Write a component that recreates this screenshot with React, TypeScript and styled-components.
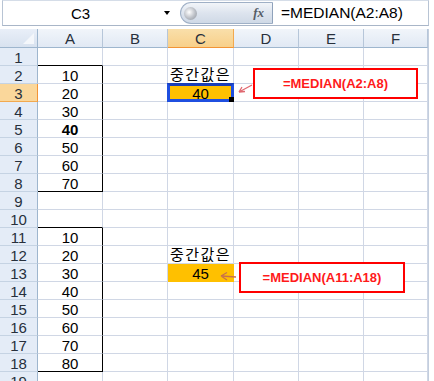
import React from 'react';
import styled, { createGlobalStyle } from 'styled-components';

const GlobalStyle = createGlobalStyle`
  html, body {
    margin: 0;
    padding: 0;
    background: #ffffff;
    overflow: hidden;
  }
  body {
    font-family: "Liberation Sans", "Noto Sans CJK KR", sans-serif;
  }
`;

type CellSpec = {
  text?: string;
  bold?: boolean;
  fill?: string;
  boxRight?: boolean;
  boxBottom?: boolean;
  selected?: boolean;
  label?: boolean;
};

const COLS = ['A', 'B', 'C', 'D', 'E', 'F'];
const ROWS = Array.from({ length: 19 }, (_, i) => i + 1);

const cells: Record<string, CellSpec> = {
  A1: { boxBottom: true },
  A2: { text: '10', boxRight: true },
  A3: { text: '20', boxRight: true },
  A4: { text: '30', boxRight: true },
  A5: { text: '40', boxRight: true, bold: true },
  A6: { text: '50', boxRight: true },
  A7: { text: '60', boxRight: true },
  A8: { text: '70', boxRight: true, boxBottom: true },
  A10: { boxBottom: true },
  A11: { text: '10', boxRight: true },
  A12: { text: '20', boxRight: true },
  A13: { text: '30', boxRight: true },
  A14: { text: '40', boxRight: true },
  A15: { text: '50', boxRight: true },
  A16: { text: '60', boxRight: true },
  A17: { text: '70', boxRight: true },
  A18: { text: '80', boxRight: true, boxBottom: true },
  C2: { text: '중간값은', boxBottom: true, label: true },
  C3: { text: '40', fill: '#ffc000', selected: true },
  C12: { text: '중간값은', label: true },
  C13: { text: '45', fill: '#ffc000' },
};

const Window = styled.div`
  position: relative;
  width: 434px;
  height: 381px;
  overflow: hidden;
  background: #ffffff;
`;

const FormulaBar = styled.div`
  display: flex;
  align-items: stretch;
  height: 26px;
  margin-left: 2px;
  width: 427px;
  box-sizing: border-box;
  border-left: 1px solid #b8c4d4;
  border-right: 1px solid #b8c4d4;
  border-top: 1px solid #d5dde8;
  border-bottom: 1px solid #a9b6c8;
  background: #ffffff;
`;

const NameBox = styled.div`
  width: 155px;
  display: flex;
  align-items: center;
  justify-content: center;
  font-size: 15px;
  color: #000;
`;

const DropArrow = styled.div`
  width: 0;
  height: 0;
  margin: 0 5px 0 6px;
  align-self: center;
  border-left: 3.5px solid transparent;
  border-right: 3.5px solid transparent;
  border-top: 4px solid #000;
`;

const FxPill = styled.div`
  display: flex;
  align-items: center;
  justify-content: space-between;
  margin: 1px 0 1px 5px;
  width: 93px;
  padding: 0 8px 0 3px;
  box-sizing: border-box;
  border: 1px solid #9fb0c6;
  border-right: 1px solid #8fa2bb;
  border-radius: 12px 0 0 12px;
  background: linear-gradient(#f2f5f9, #dde4ee 50%, #cfd9e6);
`;

const Sphere = styled.div`
  width: 13px;
  height: 13px;
  border-radius: 50%;
  background: radial-gradient(circle at 40% 40%, #ffffff, #b9bdc4 55%, #8e949c);
`;

const Fx = styled.span`
  font-family: "Liberation Serif", serif;
  font-style: italic;
  font-weight: bold;
  font-size: 13px;
  color: #555c66;
`;

const FormulaText = styled.div`
  flex: 1;
  display: flex;
  align-items: center;
  padding-left: 8px;
  font-size: 15.5px;
  color: #000;
`;

const Strip = styled.div`
  height: 3px;
  background: #ffffff;
`;

const SheetArea = styled.div`
  display: flex;
`;

const Grid = styled.div`
  display: grid;
  grid-template-columns: 38px 65px 65px 66px 65px 65px 64px;
  grid-template-rows: 19px;
  grid-auto-rows: 18px;
`;

const RightGutter = styled.div`
  flex: 1;
  border-left: 1px solid #c3cede;
  background: #ffffff;
`;

const Corner = styled.div`
  position: relative;
  box-sizing: border-box;
  border-right: 1px solid #9eb6ce;
  border-bottom: 1px solid #9eb6ce;
  background: linear-gradient(#e9eff8, #d8e2ef);

  &::after {
    content: '';
    position: absolute;
    right: 3px;
    bottom: 3px;
    width: 0;
    height: 0;
    border-left: 11px solid transparent;
    border-bottom: 11px solid #f4f7fb;
  }
`;

const ColHeader = styled.div<{ $active?: boolean }>`
  box-sizing: border-box;
  display: flex;
  align-items: center;
  justify-content: center;
  font-size: 15px;
  color: #27303c;
  border-right: 1px solid ${(p) => (p.$active ? '#f2a94f' : '#b6c6d9')};
  border-bottom: 1px solid ${(p) => (p.$active ? '#f29436' : '#9eb6ce')};
  background: ${(p) =>
    p.$active
      ? 'linear-gradient(#f9dfaa, #f8d08a)'
      : 'linear-gradient(#f1f5fa, #e1e9f4)'};
`;

const RowHeader = styled.div<{ $active?: boolean }>`
  box-sizing: border-box;
  display: flex;
  align-items: center;
  justify-content: center;
  padding-top: 1px;
  font-size: 15px;
  color: #27303c;
  border-right: 1px solid ${(p) => (p.$active ? '#f29436' : '#9eb6ce')};
  border-bottom: 1px solid ${(p) => (p.$active ? '#f2a94f' : '#c5d3e3')};
  background: ${(p) => (p.$active ? '#fad79b' : '#e4ecf7')};
`;

const Cell = styled.div<{
  $fill?: string;
  $boxRight?: boolean;
  $boxBottom?: boolean;
  $bold?: boolean;
  $label?: boolean;
}>`
  position: relative;
  box-sizing: border-box;
  display: flex;
  align-items: ${(p) => (p.$label ? 'flex-end' : 'center')};
  justify-content: center;
  padding-top: 1px;
  font-size: 15px;
  line-height: ${(p) => (p.$label ? '16px' : 'normal')};
  letter-spacing: ${(p) => (p.$label ? '1.5px' : 'normal')};
  font-weight: ${(p) => (p.$bold ? 'bold' : 'normal')};
  color: #000;
  white-space: nowrap;
  background: ${(p) => p.$fill || '#ffffff'};
  border-right: 1px solid ${(p) => (p.$boxRight ? '#000000' : p.$fill ? p.$fill : '#d0d7e5')};
  border-bottom: 1px solid ${(p) => (p.$boxBottom ? '#000000' : p.$fill ? p.$fill : '#d0d7e5')};
`;

const Selection = styled.div`
  position: absolute;
  left: -1px;
  top: -1px;
  right: -1px;
  bottom: -1px;
  border: 3px solid #1f4fe0;
  border-top-color: #1a3fb8;
  pointer-events: none;
`;

const FillHandle = styled.div`
  position: absolute;
  right: -3px;
  bottom: -3px;
  width: 5px;
  height: 5px;
  background: #000;
`;

const Callout = styled.div<{ $left: number; $top: number; $width: number }>`
  position: absolute;
  left: ${(p) => p.$left}px;
  top: ${(p) => p.$top}px;
  width: ${(p) => p.$width}px;
  height: 31px;
  box-sizing: border-box;
  border: 2px solid #ff0000;
  background: #ffffff;
  display: flex;
  align-items: center;
  justify-content: center;
  font-size: 13px;
  font-weight: bold;
  color: #ff1a1a;
`;

const Arrow = styled.svg<{ $left: number; $top: number }>`
  position: absolute;
  left: ${(p) => p.$left}px;
  top: ${(p) => p.$top}px;
`;

const App = () => {
  return (
    <>
      <GlobalStyle />
      <Window>
        <FormulaBar>
          <NameBox>C3</NameBox>
          <DropArrow />
          <FxPill>
            <Sphere />
            <Fx>fx</Fx>
          </FxPill>
          <FormulaText>=MEDIAN(A2:A8)</FormulaText>
        </FormulaBar>
        <Strip />
        <SheetArea>
          <Grid>
            <Corner />
            {COLS.map((c) => (
              <ColHeader key={c} $active={c === 'C'}>
                {c}
              </ColHeader>
            ))}
            {ROWS.map((r) => (
              <React.Fragment key={r}>
                <RowHeader $active={r === 3}>{r}</RowHeader>
                {COLS.map((c) => {
                  const s = cells[`${c}${r}`] || {};
                  return (
                    <Cell
                      key={c}
                      $fill={s.fill}
                      $boxRight={s.boxRight}
                      $boxBottom={s.boxBottom}
                      $bold={s.bold}
                      $label={s.label}
                    >
                      {s.text}
                      {s.selected && (
                        <Selection>
                          <FillHandle />
                        </Selection>
                      )}
                    </Cell>
                  );
                })}
              </React.Fragment>
            ))}
          </Grid>
          <RightGutter />
        </SheetArea>

        <Callout $left={253} $top={68} $width={165}>
          =MEDIAN(A2:A8)
        </Callout>
        <Callout $left={239} $top={262} $width={166}>
          =MEDIAN(A11:A18)
        </Callout>

        <Arrow $left={236} $top={83} width={18} height={12} viewBox="0 0 18 12">
          <path d="M16 2 L3 9 M3 9 L9 8.5 M3 9 L6 4" stroke="#e06870" strokeWidth="1.3" fill="none" />
        </Arrow>
        <Arrow $left={219} $top={271} width={18} height={11} viewBox="0 0 18 11">
          <path d="M17 6 L2 5 M2 5 L8 1.5 M2 5 L8 9" stroke="#c8704c" strokeWidth="1.3" fill="none" />
        </Arrow>
      </Window>
    </>
  );
};

export default App;
